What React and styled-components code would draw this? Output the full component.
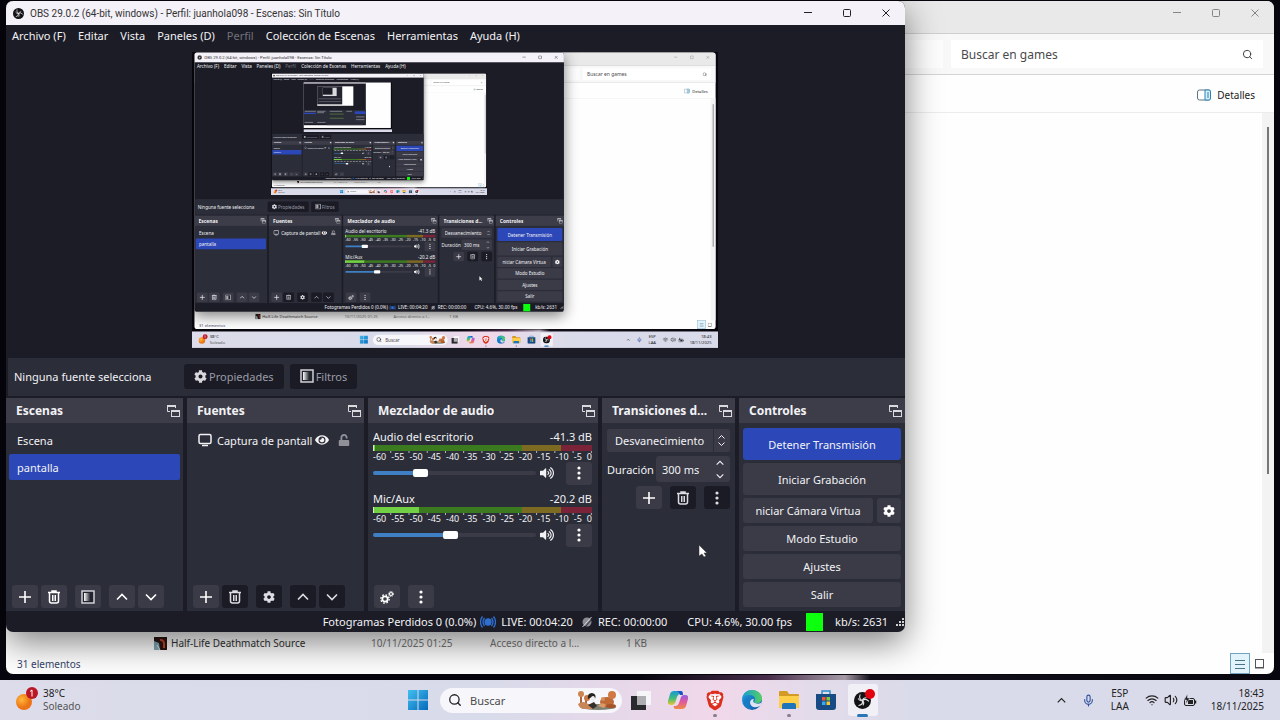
import React, { useId } from "react";
import styled, { createGlobalStyle, css } from "styled-components";
import { FaCog, FaEye, FaUnlock, FaVolumeUp } from "react-icons/fa";
import { SiBrave } from "react-icons/si";
import { Wifi, Volume2, Mic, Search } from "lucide-react";

const color = {
  base: "#1c1c26",
  panel: "#2b2d38",
  raised: "#3a3b47",
  header: "#3d3d49",
  sunken: "#1b1b25",
  text: "#f2f2f5",
  muted: "#9a9ba5",
  accent: "#2c47b8",
  slider: "#3f80c4",
};

/* Share of the desktop that each nested preview takes. */
const PREVIEW_SCALE = 0.411;
const PREVIEW_DEPTH = 2;

const GlobalStyle = createGlobalStyle`
  *, *::before, *::after { box-sizing: border-box; }
  body { margin: 0; overflow: hidden; background: #07060e; }
  button, input, select { font: inherit; color: inherit; margin: 0; }
`;

/* ---------- desktop ---------- */

const DesktopRoot = styled.div`
  position: relative;
  display: flex;
  flex-direction: column;
  width: 100vw;
  height: 100vh;
  overflow: hidden;
  font-family: "Noto Sans", "Open Sans", sans-serif;
  font-size: 10px;
  background: linear-gradient(90deg, #07060e 50%, #4a2f4d 60%, #a79ca8 66%, #14111c 68%, #07060e 100%);
`;

const WindowArea = styled.div`
  position: relative;
  flex: 1;
  background: linear-gradient(#07060e, #07060e) top / 100% calc(100% - 5px) no-repeat;
`;

const WindowFrame = styled.section`
  position: absolute;
  display: flex;
  flex-direction: column;
  overflow: hidden;
  border-radius: 7px;
`;

const Cursor = styled.svg`
  position: absolute;
  left: 698px;
  top: 544px;
`;

/* ---------- shared window parts ---------- */

const WindowButtons = styled.div`
  display: flex;
  margin-left: auto;
  color: ${(p) => p.$tone};
`;

const WindowButton = styled.button`
  display: grid;
  place-items: center;
  width: 39px;
  height: 24px;
  padding: 0;
  border: 0;
  background: none;
`;

function CaptionButtons({ tone }) {
  return (
    <WindowButtons $tone={tone}>
      <WindowButton aria-label="Minimizar">
        <svg width="10" height="10" stroke="currentColor"><path d="M1 4.500h8" /></svg>
      </WindowButton>
      <WindowButton aria-label="Maximizar">
        <svg width="10" height="10" stroke="currentColor" fill="none"><rect x="1.500" y="1.500" width="7" height="7" rx="1" /></svg>
      </WindowButton>
      <WindowButton aria-label="Cerrar">
        <svg width="10" height="10" stroke="currentColor"><path d="M1.500 1.500l7 7M8.500 1.500l-7 7" /></svg>
      </WindowButton>
    </WindowButtons>
  );
}

/* ---------- file explorer ---------- */

const ExplorerFrame = styled(WindowFrame)`
  inset: 1px 6px 6px 6px;
  background: #fefefe;
  color: #333;
`;

const ExplorerTitle = styled.header`
  display: flex;
  height: 33px;
  background: #e9e9e9;
  border-bottom: 1px solid #cfcfcf;
`;

const AddressRow = styled.div`
  display: flex;
  justify-content: flex-end;
  align-items: center;
  gap: 8px;
  height: 41px;
  padding: 0 11px;
  background: #f8f8f8;
  border-bottom: 1px solid #d4d4d4;
`;

const AddressBox = styled.div`
  flex: 1;
  height: 28px;
  background: #fdfdfd;
`;

const SearchField = styled.label`
  display: flex;
  align-items: center;
  width: 312px;
  height: 28px;
  padding: 0 10px;
  background: #fff;
`;

const SearchInput = styled.input`
  flex: 1;
  min-width: 0;
  padding: 0;
  border: 0;
  outline: 0;
  background: none;
  color: #333;
  font-size: ${(p) => p.$size}px;
  &::placeholder { color: #4a4a4a; opacity: 1; }
`;

const CommandRow = styled.div`
  display: flex;
  justify-content: flex-end;
  align-items: center;
  height: 38px;
  padding: 2px 19px 0;
  border-bottom: 1px solid #ececec;
`;

const DetailsButton = styled.button`
  display: flex;
  align-items: center;
  gap: 6px;
  padding: 0;
  border: 0;
  background: none;
  color: #222;
`;

const FileArea = styled.div`
  flex: 1;
  display: flex;
  min-height: 0;
`;

const FileTable = styled.table`
  align-self: flex-end;
  margin-left: 148px;
  border-spacing: 0;
  color: #777;
`;

const FileCell = styled.td`
  width: ${(p) => p.$width}px;
  height: 20px;
  padding: 0;
  white-space: nowrap;
`;

const FileName = styled.span`
  display: flex;
  align-items: center;
  gap: 4px;
  color: #333;
`;

const ScrollTrack = styled.div`
  width: 12px;
  margin-left: auto;
  padding: 14px 5px 0;
  background: #f3f3f3;
`;

const ScrollThumb = styled.div`
  height: 66%;
  background: #777;
`;

const ExplorerStatus = styled.footer`
  display: flex;
  align-items: center;
  height: 21px;
  padding: 0 4px 0 11px;
  color: #35446b;
`;

const ViewButton = styled.button`
  display: grid;
  place-items: center;
  width: 20px;
  height: 21px;
  padding: 0;
  border: ${(p) => (p.$active ? "1px solid #6fa3bf" : "0")};
  background: ${(p) => (p.$active ? "#e2f3fb" : "none")};
  color: #555;
  &:first-of-type { margin-left: auto; }
`;

function Explorer() {
  return (
    <ExplorerFrame aria-label="games">
      <ExplorerTitle>
        <CaptionButtons tone="#858585" />
      </ExplorerTitle>
      <AddressRow>
        <AddressBox />
        <SearchField>
          <SearchInput $size={12} aria-label="Buscar en games" placeholder="Buscar en games" />
          <Search size={11} strokeWidth={2} color="#333" />
        </SearchField>
      </AddressRow>
      <CommandRow>
        <DetailsButton>
          <svg width="14" height="12" fill="none">
            <rect x="0.500" y="1" width="13" height="10" rx="2" stroke="#5e7480" />
            <path d="M8 1h4q1.500 0 1.500 2v6q0 2-1.500 2H8z" fill="#d5effb" stroke="#2a83b4" />
            <path d="M10 4h2M10 6h2M10 8h2" stroke="#2a83b4" />
          </svg>
          Detalles
        </DetailsButton>
      </CommandRow>
      <FileArea>
        <FileTable>
          <tbody>
            <tr>
              <FileCell $width={217}>
                <FileName>
                  <svg width="13" height="13">
                    <rect width="13" height="13" fill="#2c1512" />
                    <path d="M0 4l5 2 1 7H0z" fill="#7fa7b5" />
                    <path d="M6 3q5-1 4 8" stroke="#c2472c" strokeWidth="2" fill="none" />
                    <path d="M3 8l3 5" stroke="#e4e4e4" />
                  </svg>
                  Half-Life Deathmatch Source
                </FileName>
              </FileCell>
              <FileCell $width={119}>10/11/2025 01:25</FileCell>
              <FileCell $width={136}>Acceso directo a l...</FileCell>
              <FileCell $width={40}>1 KB</FileCell>
            </tr>
          </tbody>
        </FileTable>
        <ScrollTrack><ScrollThumb /></ScrollTrack>
      </FileArea>
      <ExplorerStatus>
        31 elementos
        <ViewButton $active aria-label="Detalles">
          <svg width="10" height="10" stroke="#4c7386"><path d="M0 1.500h10M0 5.500h10M0 9.500h10" /></svg>
        </ViewButton>
        <ViewButton aria-label="Iconos grandes">
          <svg width="10" height="10" stroke="#555" fill="none"><rect x="0.500" y="0.500" width="8" height="8" /><path d="M0 9h9" /></svg>
        </ViewButton>
      </ExplorerStatus>
    </ExplorerFrame>
  );
}

/* ---------- OBS icons ---------- */

const ObsLogo = (props) => (
  <svg viewBox="0 0 24 24" {...props}>
    <circle cx="12" cy="12" r="12" fill="#131316" />
    <g fill="none" stroke="#e6e6ea" strokeWidth="1.500" strokeLinecap="round">
      {[0, 120, 240].map((turn) => (
        <path key={turn} transform={`rotate(${turn} 12 12)`} d="M12 12q-5.500-2-3.500-8M12 12q1-4 5-4" />
      ))}
    </g>
  </svg>
);

const UndockIcon = () => (
  <svg width="14" height="14" fill="none" stroke="#d9d9de">
    <path d="M4 7.500H1.500V1.500h8V4" />
    <path d="M1 2h9" strokeWidth="2" />
    <rect x="5.500" y="6.500" width="8" height="6" />
    <path d="M5 7h9" strokeWidth="2" />
  </svg>
);

const PlusIcon = () => (
  <svg width="14" height="14" stroke="currentColor" strokeWidth="1.600"><path d="M7 1v12M1 7h12" /></svg>
);

const TrashIcon = () => (
  <svg width="14" height="14" fill="none" stroke="currentColor" strokeWidth="1.500">
    <path d="M1 2.500h12M5 2V1h4v1M2.500 3v8q0 2 2 2h5q2 0 2-2V3" />
    <path d="M5.500 5v6M7 5v6M8.500 5v6" strokeWidth="1" />
  </svg>
);

const FilterIcon = () => {
  const id = useId();
  return (
    <svg width="14" height="14">
      <defs>
        <linearGradient id={id}><stop offset="0" stopColor="#fff" /><stop offset="1" stopColor="#2b2d38" /></linearGradient>
      </defs>
      <rect x="1" y="1" width="12" height="12" fill="#22232d" stroke="#d0d0d6" strokeWidth="1.500" />
      <rect x="3" y="3" width="6" height="8" fill={`url(#${id})`} />
    </svg>
  );
};

const ChevronIcon = ({ down, size = 12 }) => (
  <svg width={size} height={size} viewBox="0 0 12 12" fill="none" stroke="currentColor" strokeWidth="1.600">
    <path d={down ? "M1 3.500l5 5 5-5" : "M1 8.500l5-5 5 5"} />
  </svg>
);

const DotsIcon = () => (
  <svg width="4" height="14" fill="currentColor">
    <circle cx="2" cy="2" r="1.600" /><circle cx="2" cy="7" r="1.600" /><circle cx="2" cy="12" r="1.600" />
  </svg>
);

const GearsIcon = () => (
  <svg width="14" height="14" fill="none" stroke="currentColor">
    <circle cx="5" cy="9" r="2.700" strokeWidth="1.800" />
    <circle cx="5" cy="9" r="4.200" strokeWidth="1.300" strokeDasharray="1.650 1.650" />
    <circle cx="11" cy="4" r="1.500" strokeWidth="1.200" />
    <circle cx="11" cy="4" r="2.500" strokeWidth="1" strokeDasharray="1 1" />
  </svg>
);

const LiveIcon = () => (
  <svg width="16" height="14" fill="none" stroke="#2f6fd0" strokeWidth="1.300">
    <circle cx="8" cy="7" r="3" fill="#2f6fd0" />
    <path d="M4.500 3q-3 4 0 8M11.500 3q3 4 0 8M2.500 1.500q-4 5.500 0 11M13.500 1.500q4 5.500 0 11" />
  </svg>
);

const RecIcon = () => (
  <svg width="12" height="12"><circle cx="6" cy="6" r="4.500" fill="#8b8c94" /><path d="M1.500 11L10.500 1" stroke="#d2d2d8" /><path d="M3 12L12 2" stroke="#22222c" /></svg>
);

/* ---------- OBS window ---------- */

const ObsFrame = styled(WindowFrame)`
  inset: 1px 375px 48px 6px;
  background: ${color.base};
  color: ${color.text};
  font-size: 11px;
  box-shadow: 0 10px 34px rgba(0, 0, 0, 0.5);
`;

const ObsTitle = styled.header`
  display: flex;
  align-items: center;
  gap: 6px;
  height: 24px;
  padding-left: 7px;
  background: #f4f1f8;
  color: #333;
  font-family: Roboto, "Open Sans", sans-serif;
  font-size: 10px;
  white-space: nowrap;
`;

const MenuBar = styled.nav`
  display: flex;
  align-items: center;
  gap: 12px;
  height: 20px;
  padding: 0 6px;
`;

const MenuItem = styled.button`
  padding: 0;
  border: 0;
  background: none;
  white-space: nowrap;
  &:disabled { color: #70717c; }
`;

const PreviewArea = styled.div`
  flex: 1;
  min-height: 0;
  padding-top: 7px;
`;

const PreviewFrame = styled.div`
  width: ${PREVIEW_SCALE * 100}vw;
  height: ${PREVIEW_SCALE * 100}vh;
  margin: 0 auto;
  overflow: hidden;
`;

const PreviewScene = styled.div`
  width: 100vw;
  height: 100vh;
  transform: scale(${PREVIEW_SCALE});
  transform-origin: 0 0;
`;

const SourceBar = styled.div`
  display: flex;
  align-items: center;
  height: 38px;
  margin: 0 0 2px 2px;
  padding: 0 6px 2px;
  gap: 6px;
  background: ${color.panel};
`;

const SourceLabel = styled.span`
  width: 164px;
  white-space: nowrap;
`;

const SourceButton = styled.button`
  display: flex;
  align-items: center;
  gap: 2px;
  height: 25px;
  padding: 0 10px;
  border: 0;
  border-radius: 3px;
  background: ${color.sunken};
  color: ${color.muted};
  & svg { color: #d8d8de; }
`;

const DockGrid = styled.div`
  display: grid;
  grid-template-columns: 177fr 177fr 230fr 133fr 166fr;
  gap: 4px;
  height: 213px;
`;

const Dock = styled.section`
  display: flex;
  flex-direction: column;
  min-width: 0;
  background: ${color.panel};
`;

const DockHeader = styled.header`
  display: flex;
  align-items: center;
  justify-content: space-between;
  height: 25px;
  padding: 0 3px 0 10px;
  background: ${color.header};
`;

const DockTitle = styled.h2`
  margin: 0;
  overflow: hidden;
  white-space: nowrap;
  font-size: 12px;
  font-weight: 700;
`;

const DockBody = styled.div`
  flex: 1;
  display: flex;
  flex-direction: column;
  gap: ${(p) => p.$gap || 0}px;
  padding: ${(p) => p.$pad};
`;

const DockFooter = styled.footer`
  display: flex;
  gap: 3px;
  padding: 0 6px 3px;
`;

const toolButton = css`
  display: grid;
  place-items: center;
  padding: 0;
  border: 0;
  border-radius: 3px;
  background: ${color.raised};
  color: #fff;
  &:disabled { background: ${color.sunken}; color: #dcdce2; }
`;

const ToolButton = styled.button`
  ${toolButton}
  width: 26px;
  height: 23px;
  margin-left: ${(p) => (p.$apart ? 5 : 0)}px;
`;

function DockPanel({ title, children }) {
  return (
    <Dock>
      <DockHeader>
        <DockTitle>{title}</DockTitle>
        <UndockIcon />
      </DockHeader>
      {children}
    </Dock>
  );
}

const SceneItem = styled.button`
  height: 26px;
  padding: 0 8px;
  border: 0;
  border-radius: 2px;
  background: ${(p) => (p.$selected ? color.accent : "none")};
  text-align: left;
`;

const SourceItem = styled.div`
  display: flex;
  align-items: center;
  height: 26px;
  & svg { flex: none; }
`;

const SourceName = styled.span`
  flex: 1;
  margin-left: 5px;
  white-space: nowrap;
`;

const SourceToggle = styled.button`
  display: grid;
  padding: 0;
  margin-left: ${(p) => p.$before}px;
  border: 0;
  background: none;
`;

const MixerStrip = styled.div`
  display: flex;
  flex-direction: column;
  height: 62px;
`;

const MixerLabel = styled.div`
  display: flex;
  justify-content: space-between;
  height: 16px;
  line-height: 16px;
`;

const MeterBar = styled.div`
  height: 6px;
  background: linear-gradient(90deg, #3c7a20 68%, #7d6a22 68% 86%, #7b2338 86%);
`;

const MeterLevel = styled.div`
  width: ${(p) => p.$level}%;
  height: 6px;
  background: #72d044;
  border-left: 1px solid #d6f0c8;
`;

const MeterScale = styled.div`
  display: flex;
  justify-content: space-between;
  height: 11px;
  font-size: 9px;
  line-height: 11px;
  background: linear-gradient(90deg, transparent calc(100% - 1px), #b9bac2 0) 0 0 / calc(100% / 12) 2px repeat-x;
`;

const SliderRow = styled.div`
  display: flex;
  align-items: center;
  height: 22px;
`;

const VolumeSlider = styled.input.attrs({ type: "range" })`
  flex: 1;
  min-width: 0;
  height: 4px;
  appearance: none;
  border-radius: 2px;
  background: linear-gradient(90deg, ${color.slider} ${(p) => p.value}%, ${color.raised} ${(p) => p.value}%);
  &::-webkit-slider-thumb {
    appearance: none;
    width: 15px;
    height: 8px;
    border-radius: 2px;
    background: #fff;
  }
`;

const MuteButton = styled.button`
  display: grid;
  place-items: center;
  width: 30px;
  padding: 0 9px 0 0;
  border: 0;
  background: none;
`;

const SCALE_MARKS = ["-60", "-55", "-50", "-45", "-40", "-35", "-30", "-25", "-20", "-15", "-10", "-5", "0"];

function MixerChannel({ name, db, level, volume }) {
  return (
    <MixerStrip>
      <MixerLabel><span>{name}</span><span>{db}</span></MixerLabel>
      <MeterBar><MeterLevel $level={level} /></MeterBar>
      <MeterScale>{SCALE_MARKS.map((m) => <span key={m}>{m}</span>)}</MeterScale>
      <SliderRow>
        <VolumeSlider aria-label={`Volumen de ${name}`} value={volume} readOnly />
        <MuteButton aria-label="Silenciar"><FaVolumeUp size={14} /></MuteButton>
        <ToolButton aria-label="Opciones"><DotsIcon /></ToolButton>
      </SliderRow>
    </MixerStrip>
  );
}

const SelectBox = styled.div`
  position: relative;
  display: flex;
  height: 23px;
  & svg { position: absolute; right: 4px; top: 5px; pointer-events: none; }
`;

const TransitionSelect = styled.select`
  appearance: none;
  flex: 1;
  min-width: 0;
  padding: 0 8px;
  border: 0;
  border-radius: 3px;
  background: linear-gradient(90deg, ${color.raised} calc(100% - 17px), ${color.panel} 0 calc(100% - 16px), ${color.raised} 0);
`;

const DurationRow = styled.div`
  display: flex;
  align-items: center;
  justify-content: space-between;
  height: 26px;
`;

const SpinBox = styled.div`
  display: flex;
  width: 74px;
  height: 26px;
  border-radius: 3px;
  background: ${color.raised};
`;

const SpinInput = styled.input`
  flex: 1;
  min-width: 0;
  padding: 0 0 0 6px;
  border: 0;
  background: none;
`;

const SpinButtons = styled.div`
  display: grid;
  width: 20px;
`;

const SpinButton = styled.button`
  display: grid;
  place-items: center;
  padding: 0;
  border: 0;
  background: none;
`;

const TransitionTools = styled.div`
  display: flex;
  justify-content: flex-end;
  gap: 8px;
`;

const ControlButton = styled.button`
  flex: 1;
  height: ${(p) => (p.$tall ? 32 : 25)}px;
  padding: 0;
  border: 0;
  border-radius: 3px;
  background: ${(p) => (p.$active ? color.accent : color.raised)};
  white-space: nowrap;
`;

const ControlRow = styled.div`
  display: flex;
  gap: 4px;
`;

const ControlGear = styled.button`
  ${toolButton}
  width: 24px;
`;

const StatusBar = styled.footer`
  display: flex;
  align-items: center;
  justify-content: flex-end;
  height: 21px;
  padding-right: 1px;
  white-space: nowrap;
`;

const StatusText = styled.span`
  margin-right: ${(p) => p.$after}px;
`;

const StatusIcon = styled.span`
  display: grid;
  margin-right: 5px;
`;

const HealthLight = styled.span`
  width: 17px;
  height: 18px;
  margin-right: 12px;
  background: #0cff0c;
`;

/* The innermost preview is too small for text, so it is drawn. */
const TinyPreview = () => (
  <svg width="100%" height="100%" viewBox="0 0 64 36" preserveAspectRatio="none">
    <rect width="64" height="36" fill="#0b0a12" />
    <rect width="63" height="33" fill="#fefefe" />
    <rect width="45" height="31" fill="#1c1c26" />
    <rect width="45" height="1" fill="#f4f1f8" />
    <rect y="20" width="45" height="10" fill="#2b2d38" />
    <rect y="22" width="9" height="1" fill="#2c47b8" />
    <rect x="37" y="21" width="8" height="2" fill="#2c47b8" />
    <path d="M1 21h8M10 21h6M19 21h9M31 21h4M10 22h5M38 25h6M38 27h6M1 29h6M10 29h6M17 31h26" stroke="#9a9ba5" strokeWidth="0.500" />
    <path d="M19 23h10M19 26h10" stroke="#5d8a3c" strokeWidth="0.500" />
    <rect x="10" y="3" width="26" height="14" fill="#fefefe" />
    <rect x="10" y="3" width="18" height="13" fill="#22232d" />
    <rect x="14" y="4" width="10" height="6" fill="#d9d9de" />
    <rect x="14" y="4" width="7" height="5" fill="#1c1c26" />
    <path d="M11 12h16M11 14h16" stroke="#70717c" strokeWidth="0.500" />
    <rect y="34" width="64" height="2" fill="#d9dbea" />
  </svg>
);

function ObsWindow({ depth }) {
  const id = useId();
  return (
    <ObsFrame aria-label="OBS">
      <ObsTitle>
        <ObsLogo width={11} height={11} />
        OBS 29.0.2 (64-bit, windows) - Perfil: juanhola098 - Escenas: Sin Título
        <CaptionButtons tone="#222" />
      </ObsTitle>
      <MenuBar>
        <MenuItem>Archivo (F)</MenuItem>
        <MenuItem>Editar</MenuItem>
        <MenuItem>Vista</MenuItem>
        <MenuItem>Paneles (D)</MenuItem>
        <MenuItem disabled>Perfil</MenuItem>
        <MenuItem>Colección de Escenas</MenuItem>
        <MenuItem>Herramientas</MenuItem>
        <MenuItem>Ayuda (H)</MenuItem>
      </MenuBar>
      <PreviewArea>
        <PreviewFrame>
          {depth < PREVIEW_DEPTH ? (
            <PreviewScene inert aria-hidden="true">
              <Desktop depth={depth + 1} />
            </PreviewScene>
          ) : (
            <TinyPreview />
          )}
        </PreviewFrame>
      </PreviewArea>
      <SourceBar>
        <SourceLabel>Ninguna fuente selecciona</SourceLabel>
        <SourceButton disabled><FaCog size={13} />Propiedades</SourceButton>
        <SourceButton disabled><FilterIcon />Filtros</SourceButton>
      </SourceBar>
      <DockGrid>
        <DockPanel title="Escenas">
          <DockBody $pad="4px 3px 0" $gap={1}>
            <SceneItem>Escena</SceneItem>
            <SceneItem $selected>pantalla</SceneItem>
          </DockBody>
          <DockFooter>
            <ToolButton aria-label="Añadir escena"><PlusIcon /></ToolButton>
            <ToolButton aria-label="Eliminar escena"><TrashIcon /></ToolButton>
            <ToolButton $apart aria-label="Filtros de escena"><FilterIcon /></ToolButton>
            <ToolButton $apart aria-label="Subir escena"><ChevronIcon /></ToolButton>
            <ToolButton aria-label="Bajar escena"><ChevronIcon down /></ToolButton>
          </DockFooter>
        </DockPanel>
        <DockPanel title="Fuentes">
          <DockBody $pad="4px 14px 0 11px">
            <SourceItem>
              <svg width="14" height="14" fill="none" stroke="#f2f2f5" strokeWidth="1.500">
                <rect x="1" y="1.500" width="12" height="9" rx="1.500" /><path d="M4 12.500h6" />
              </svg>
              <SourceName>Captura de pantall</SourceName>
              <SourceToggle $before={3} aria-label="Visible"><FaEye size={14} /></SourceToggle>
              <SourceToggle $before={9} aria-label="Bloquear"><FaUnlock size={12} color="#8f9098" /></SourceToggle>
            </SourceItem>
          </DockBody>
          <DockFooter>
            <ToolButton aria-label="Añadir fuente"><PlusIcon /></ToolButton>
            <ToolButton disabled aria-label="Eliminar fuente"><TrashIcon /></ToolButton>
            <ToolButton disabled $apart aria-label="Propiedades de fuente"><FaCog size={12} /></ToolButton>
            <ToolButton disabled $apart aria-label="Subir fuente"><ChevronIcon /></ToolButton>
            <ToolButton disabled aria-label="Bajar fuente"><ChevronIcon down /></ToolButton>
          </DockFooter>
        </DockPanel>
        <DockPanel title="Mezclador de audio">
          <DockBody $pad="6px 6px 0 5px">
            <MixerChannel name="Audio del escritorio" db="-41.3 dB" level={1} volume={27} />
            <MixerChannel name="Mic/Aux" db="-20.2 dB" level={21} volume={47} />
          </DockBody>
          <DockFooter>
            <ToolButton aria-label="Propiedades de audio"><GearsIcon /></ToolButton>
            <ToolButton $apart aria-label="Menú del mezclador"><DotsIcon /></ToolButton>
          </DockFooter>
        </DockPanel>
        <DockPanel title="Transiciones d...">
          <DockBody $pad="6px 5px 0" $gap={4}>
            <SelectBox>
              <TransitionSelect aria-label="Transición"><option>Desvanecimiento</option></TransitionSelect>
              <svg width="9" height="13" fill="none" stroke="#f2f2f5"><path d="M1.500 4.500l3-3 3 3M1.500 8.500l3 3 3-3" /></svg>
            </SelectBox>
            <DurationRow>
              <label htmlFor={id}>Duración</label>
              <SpinBox>
                <SpinInput id={id} defaultValue="300 ms" />
                <SpinButtons>
                  <SpinButton aria-label="Más"><ChevronIcon size={8} /></SpinButton>
                  <SpinButton aria-label="Menos"><ChevronIcon size={8} down /></SpinButton>
                </SpinButtons>
              </SpinBox>
            </DurationRow>
            <TransitionTools>
              <ToolButton aria-label="Añadir transición"><PlusIcon /></ToolButton>
              <ToolButton disabled aria-label="Eliminar transición"><TrashIcon /></ToolButton>
              <ToolButton disabled aria-label="Opciones de transición"><DotsIcon /></ToolButton>
            </TransitionTools>
          </DockBody>
        </DockPanel>
        <DockPanel title="Controles">
          <DockBody $pad="5px 4px 0" $gap={3}>
            <ControlRow><ControlButton $tall $active>Detener Transmisión</ControlButton></ControlRow>
            <ControlRow><ControlButton $tall>Iniciar Grabación</ControlButton></ControlRow>
            <ControlRow>
              <ControlButton>niciar Cámara Virtua</ControlButton>
              <ControlGear aria-label="Configurar cámara virtual"><FaCog size={12} /></ControlGear>
            </ControlRow>
            <ControlRow><ControlButton>Modo Estudio</ControlButton></ControlRow>
            <ControlRow><ControlButton>Ajustes</ControlButton></ControlRow>
            <ControlRow><ControlButton>Salir</ControlButton></ControlRow>
          </DockBody>
        </DockPanel>
      </DockGrid>
      <StatusBar>
        <StatusText $after={4}>Fotogramas Perdidos 0 (0.0%)</StatusText>
        <StatusIcon><LiveIcon /></StatusIcon>
        <StatusText $after={8}>LIVE: 00:04:20</StatusText>
        <StatusIcon><RecIcon /></StatusIcon>
        <StatusText $after={20}>REC: 00:00:00</StatusText>
        <StatusText $after={14}>CPU: 4.6%, 30.00 fps</StatusText>
        <HealthLight />
        <StatusText $after={8}>kb/s: 2631</StatusText>
        <svg width="8" height="8" fill="#d0d0d6">
          <path d="M6 0h2v2H6zM3 3h2v2H3zM6 3h2v2H6zM0 6h2v2H0zM3 6h2v2H3zM6 6h2v2H6z" />
        </svg>
      </StatusBar>
    </ObsFrame>
  );
}

/* ---------- taskbar ---------- */

const TaskbarRoot = styled.footer`
  display: grid;
  grid-template-columns: 1fr auto 1fr;
  align-items: center;
  height: 40px;
  padding: 0 16px;
  background: linear-gradient(90deg, #dcdcea 0%, #d8dbea 38%, #e6d8e9 48%, #f0d8ea 56%, #e4dbea 63%, #d9dbea 72%);
  color: #222;
`;

const Weather = styled.button`
  display: flex;
  align-items: center;
  gap: 3px;
  padding: 0;
  border: 0;
  background: none;
  text-align: left;
`;

const TwoLines = styled.span`
  display: grid;
  line-height: 13px;
  text-align: ${(p) => p.$align || "left"};
`;

const Dim = styled.span`
  color: #555;
`;

const TaskCenter = styled.div`
  display: flex;
  align-items: center;
`;

const TaskButton = styled.button`
  position: relative;
  display: grid;
  place-items: center;
  width: 37px;
  height: 34px;
  padding: 0;
  border: 0;
  background: none;
`;

const TaskTile = styled.span`
  display: grid;
  place-items: center;
  width: 30px;
  height: 32px;
  border-radius: 3px;
  background: ${(p) => (p.$active ? "#f1f0f6" : "none")};
`;

const RunningMark = styled.span`
  position: absolute;
  bottom: 0;
  width: ${(p) => (p.$active ? 11 : 4)}px;
  height: 3px;
  border-radius: 2px;
  background: ${(p) => (p.$active ? "#2878b8" : "#85808d")};
`;

const TaskSearch = styled.label`
  display: flex;
  align-items: center;
  gap: 8px;
  width: 182px;
  height: 25px;
  margin-left: 4px;
  padding: 0 4px 0 8px;
  border-radius: 13px;
  background: #f6f6fb;
`;

const Tray = styled.div`
  display: flex;
  align-items: center;
  justify-content: flex-end;
`;

const TrayButton = styled.button`
  display: flex;
  align-items: center;
  gap: 5px;
  margin-left: ${(p) => p.$before || 0}px;
  padding: 0;
  border: 0;
  background: none;
`;

const WeatherIcon = () => (
  <svg width="24" height="28">
    <defs>
      <radialGradient id="sun" cx="35%" cy="35%"><stop offset="0" stopColor="#ffb83a" /><stop offset="1" stopColor="#ec7416" /></radialGradient>
    </defs>
    <circle cx="8" cy="16" r="8" fill="url(#sun)" />
    <circle cx="16" cy="7" r="6" fill="#bb1826" />
    <path d="M14 5.500l2-1.500v6.500" stroke="#fff" fill="none" />
  </svg>
);

const StartIcon = () => (
  <svg width="20" height="20">
    <defs><linearGradient id="start" gradientUnits="userSpaceOnUse" x2="20" y2="20"><stop stopColor="#42bff0" /><stop offset="1" stopColor="#0669bb" /></linearGradient></defs>
    <path fill="url(#start)" d="M0 0h9.500v9.500H0zM10.500 0H20v9.500h-9.500zM0 10.500h9.500V20H0zM10.500 10.500H20V20h-9.500z" />
  </svg>
);

const SearchArt = () => (
  <svg width="42" height="22">
    <ellipse cx="22" cy="18" rx="18" ry="3" fill="#7d8174" />
    <path d="M5 6v11M10 8v8" stroke="#ae643a" strokeWidth="2" />
    <circle cx="5" cy="5" r="3" fill="#cc8450" /><circle cx="11" cy="9" r="3" fill="#c97842" />
    <path d="M2 15q5-4 10 0l8 2-3 3H8q-5-1-6-5z" fill="#c98757" />
    <path d="M12 10q-1-6 4-6 5 1 3 6l-3-2z" fill="#26231f" /><ellipse cx="17" cy="10" rx="2" ry="3" fill="#eee" />
    <path d="M12 16l6-3 3 4-4 3z" fill="#33302c" />
    <ellipse cx="31" cy="13" rx="7" ry="5" fill="#bf6b38" /><circle cx="36" cy="6" r="4" fill="#cf7a42" />
    <circle cx="27" cy="10" r="2" fill="#d88d59" /><ellipse cx="35" cy="17" rx="5" ry="2" fill="#a65328" />
    <path d="M22 17q4-5 8-1l-2 3z" fill="#dc9a68" />
  </svg>
);

const TaskViewIcon = () => (
  <svg width="20" height="19">
    <path d="M6 0h14v14H6z" fill="#f5f5f8" /><path d="M0 5h15v14H0z" fill="#29292e" /><path d="M6 5h9v9H6z" fill="#adadb2" />
  </svg>
);

const CopilotIcon = () => (
  <svg width="20" height="20" viewBox="0 0 20 20">
    <defs>
      <linearGradient id="cpA" x2="0" y2="1"><stop stopColor="#1698d8" /><stop offset=".55" stopColor="#45bd78" /><stop offset="1" stopColor="#f0c52e" /></linearGradient>
      <linearGradient id="cpB" x2="0" y2="1"><stop stopColor="#9560e2" /><stop offset=".5" stopColor="#e05a9b" /><stop offset="1" stopColor="#f28a42" /></linearGradient>
    </defs>
    <path d="M6 1h7q2 0 1 3h-2q-2 0-3 3l-2 6q-1 2-3 2H3q-4 0-3-4l2-7q1-3 4-3z" fill="url(#cpA)" />
    <path d="M14 19H8q-3 0-2-3h2q2 0 3-3l2-6q1-2 3-2h1q4 0 3 4l-2 7q-1 3-4 3z" fill="url(#cpB)" />
    <path d="M8 1h5q2 0 2 4h-3q-1-4-4-4z" fill="#2053c5" />
  </svg>
);

const BraveIcon = () => (
  <svg width="20" height="21" viewBox="0 0 24 24">
    <path d="M5 5l14 0 1 8-8 8-8-8z" fill="#fff" />
    <SiBrave size={24} color="#dc2f1d" />
  </svg>
);

const EdgeIcon = () => (
  <svg width="20" height="20" viewBox="0 0 20 20">
    <defs>
      <linearGradient id="edA"><stop stopColor="#159bd9" /><stop offset="1" stopColor="#57cf62" /></linearGradient>
      <linearGradient id="edB" x2="1" y2="1"><stop stopColor="#1ba0df" /><stop offset="1" stopColor="#1550a3" /></linearGradient>
    </defs>
    <circle cx="10" cy="10" r="10" fill="url(#edB)" />
    <path d="M0 9C1 3 5 0 10 0c6 0 10 4 10 8 0 4-3 6-7 5-2-1 0-2 0-4 0-3-3-4-6-4-3 0-6 2-7 4z" fill="url(#edA)" />
    <path d="M13 13q-3-1-1-4-4 0-4 4 1 5 7 4 2 0 4-2l1-3q-3 3-7 1z" fill="#dfe2f0" />
    <path d="M8 9q-4 5 2 10-9 0-8-8 2-4 6-2z" fill="#177cc7" />
  </svg>
);

const FolderIcon = () => (
  <svg width="22" height="20">
    <path d="M1 2q0-1 1-1h7l2 3h9q1 0 1 1v13H1z" fill="#d39b24" />
    <path d="M1 6h20v11q0 1-1 1H2q-1 0-1-1z" fill="#ffcf4a" />
    <path d="M4 19v-4q0-2 2-2h10q2 0 2 2v4z" fill="#1c76b9" />
  </svg>
);

const StoreIcon = () => (
  <svg width="20" height="20">
    <path d="M6 5V1h8v4" fill="none" stroke="#2a8fc8" strokeWidth="1.500" />
    <path d="M0 4h20v13q0 3-3 3H3q-3 0-3-3z" fill="#184b83" />
    <path d="M6 7h3.500v3.500H6z" fill="#ee5738" /><path d="M10.500 7H14v3.500h-3.500z" fill="#84c83b" />
    <path d="M6 11.500h3.500V15H6z" fill="#37a9e8" /><path d="M10.500 11.500H14V15h-3.500z" fill="#f4c739" />
  </svg>
);

const ObsTaskIcon = () => (
  <svg width="24" height="24">
    <ObsLogo x={3} y={4} width={17} height={17} />
    <circle cx="19" cy="6" r="5" fill="#e3000f" />
  </svg>
);

const BatteryIcon = () => (
  <svg width="14" height="13" fill="none" stroke="#222">
    <rect x="1.500" y="4.500" width="10" height="7" rx="1.500" />
    <path d="M12.500 6.500v3" strokeWidth="1.500" />
    <rect x="5" y="6" width="5" height="4" fill="#222" stroke="none" />
    <path d="M4.500 0L1 6h2.500L2.500 10 7 4H4.500z" fill="#222" stroke="#d9dbea" strokeWidth="0.500" />
  </svg>
);

const TASKS = [
  { name: "Vista de tareas", Icon: TaskViewIcon },
  { name: "Copilot", Icon: CopilotIcon },
  { name: "Brave", Icon: BraveIcon, running: true },
  { name: "Edge", Icon: EdgeIcon },
  { name: "Explorador", Icon: FolderIcon, running: true },
  { name: "Store", Icon: StoreIcon },
  { name: "OBS", Icon: ObsTaskIcon, running: true, active: true },
];

function Taskbar() {
  return (
    <TaskbarRoot>
      <Weather>
        <WeatherIcon />
        <TwoLines><span>38°C</span><Dim>Soleado</Dim></TwoLines>
      </Weather>
      <TaskCenter>
        <TaskButton aria-label="Inicio"><StartIcon /></TaskButton>
        <TaskSearch>
          <Search size={14} color="#222" strokeWidth={2.2} />
          <SearchInput $size={11} aria-label="Buscar" placeholder="Buscar" />
          <SearchArt />
        </TaskSearch>
        {TASKS.map(({ name, Icon, running, active }) => (
          <TaskButton key={name} aria-label={name}>
            <TaskTile $active={active}><Icon /></TaskTile>
            {running && <RunningMark $active={active} />}
          </TaskButton>
        ))}
      </TaskCenter>
      <Tray>
        <TrayButton aria-label="Mostrar iconos ocultos"><ChevronIcon size={9} /></TrayButton>
        <TrayButton $before={16} aria-label="Micrófono"><Mic size={13} color="#2b4f9e" /></TrayButton>
        <TrayButton $before={16}><TwoLines $align="center"><span>ESP</span><span>LAA</span></TwoLines></TrayButton>
        <TrayButton $before={16} aria-label="Red, volumen y batería">
          <Wifi size={14} /><Volume2 size={14} /><BatteryIcon />
        </TrayButton>
        <TrayButton $before={14}><TwoLines $align="right"><span>18:43</span><span>18/11/2025</span></TwoLines></TrayButton>
      </Tray>
    </TaskbarRoot>
  );
}

function Desktop({ depth }) {
  return (
    <DesktopRoot>
      <WindowArea>
        <Explorer />
        <ObsWindow depth={depth} />
      </WindowArea>
      <Taskbar />
      <Cursor width="10" height="14"><path d="M1 1v11l3-2 2 3 2-1-2-3h3z" fill="#fff" stroke="#333" strokeWidth="0.500" /></Cursor>
    </DesktopRoot>
  );
}

export default function App() {
  return (
    <>
      <GlobalStyle />
      <Desktop depth={0} />
    </>
  );
}
